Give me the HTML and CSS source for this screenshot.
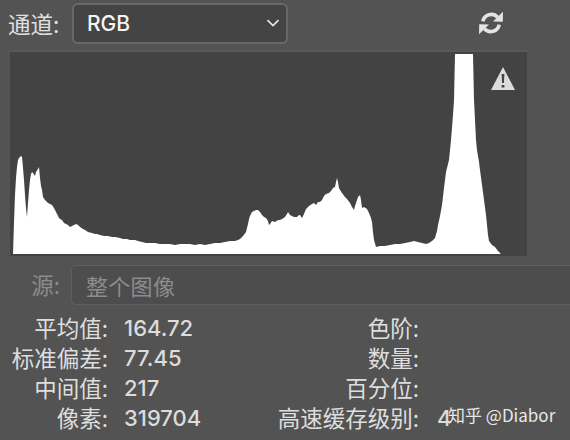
FILE: index.html
```html
<!DOCTYPE html>
<html lang="zh">
<head>
<meta charset="utf-8">
<title>直方图</title>
<link rel="stylesheet" href="styles.css">
</head>
<body>
<main class="panel">
  <div class="row channel">
    <span class="row-label">通道:</span>
    <div class="select">
      <span class="select-value">RGB</span>
      <svg class="chev" viewBox="0 0 14 8" width="14" height="8"><path d="M1.5 1.2 7 6.6l5.5-5.4" fill="none" stroke="#e6e6e6" stroke-width="1.7"/></svg>
    </div>
    <svg class="refresh" viewBox="0 0 26 26" width="26" height="26">
      <path d="M4.8 11.4A8.6 8.6 0 0 1 19.6 7.2" fill="none" stroke="#e4e4e4" stroke-width="3.6"/>
      <path d="M25 1.8 24.8 11.8 15 11.6Z" fill="#e4e4e4"/>
      <path d="M21.2 14.6A8.6 8.6 0 0 1 6.4 18.8" fill="none" stroke="#e4e4e4" stroke-width="3.6"/>
      <path d="M1 24.2 1.2 14.2 11 14.4Z" fill="#e4e4e4"/>
    </svg>
  </div>
  <div class="histogram">
    <svg class="graph" viewBox="10 52 517 204" width="517" height="204">
      <polygon fill="#ffffff" points="13,254 14,222 15,195 16,178 17,167 18,160 19,158 21,156 22,157 23,168 24,180 25,195 26,208 27,217 28,203 29,190 30,180 31,174 32,172 33,173 35,176 36,172 38,169 39,167 40,178 41,186 42,190 43,197 45,200 46,201 48,203 50,204 52,205 54,208 56,212 57,214 59,218 60,219 62,220 64,223 66,224 68,225 70,227 72,226 74,225 76,224 78,225 80,227 83,229 85,230 88,232 92,233 95,234 97,234 100,235 104,236 108,236 112,237 115,237 120,238 123,239 127,239 130,240 135,240 138,241 142,242 146,243 150,243 155,243 160,244 165,244 170,244 175,245 180,244 185,244 190,244 195,245 200,244 205,245 210,244 215,243 220,243 225,242 230,241 235,241 238,240 240,239 243,236 246,232 248,224 249,219 250,216 252,212 254,211 256,210 258,210 260,212 262,215 264,217 266,218 268,221 269,225 270,224 272,221 275,222 278,220 280,220 282,219 285,217 287,214 288,212 290,215 292,216 294,217 297,217 299,215 300,215 302,218 304,214 306,209 309,206 312,204 314,203 316,205 318,202 320,202 322,200 324,196 326,194 329,193 331,191 333,188 335,187 336,182 337,178 338,182 339,188 340,190 342,193 345,197 347,199 350,203 352,207 354,210 355,206 357,200 358,197 360,195 361,200 362,208 364,207 367,209 369,213 371,218 372,222 373,232 374,240 376,247 380,246 385,246 390,245 395,244 400,244 405,243 410,242 414,241 418,242 422,243 426,244 429,243 432,241 435,238 437,231 438,225 440,216 442,205 444,188 446,172 448,164 449,160 450,150 451,140 453,115 454,100 455,54 473,54 474,100 476,140 477,150 479,162 480,170 482,185 484,200 486,215 487,225 488,235 489,241 492,245 495,247 498,251 501,254"/>
      <path d="M503 67 515 90H491Z" fill="#dcdcdc"/>
      <path d="M501.6 74h2.8l-.5 9h-1.8ZM501.6 85h2.8v2.6h-2.8Z" fill="#434343"/>
    </svg>
  </div>
  <div class="row source">
    <span class="row-label dim">源:</span>
    <div class="select disabled">
      <span class="select-value-dim">整个图像</span>
      <svg class="chev-dim" viewBox="0 0 14 8" width="14" height="8"><path d="M1 1 7 7l6-6" fill="none" stroke="#707070" stroke-width="1.5"/></svg>
    </div>
  </div>
  <dl class="stats">
    <dt>平均值:</dt><dd class="num">164.72</dd><dt>色阶:</dt><dd></dd>
    <dt>标准偏差:</dt><dd class="num">77.45</dd><dt>数量:</dt><dd></dd>
    <dt>中间值:</dt><dd class="num">217</dd><dt>百分位:</dt><dd></dd>
    <dt>像素:</dt><dd class="num">319704</dd><dt>高速缓存级别:</dt><dd class="num">4</dd>
  </dl>
  <div class="watermark">知乎 @Diabor</div>
</main>
</body>
</html>
```
FILE: styles.css
```css
html, body {
  margin: 0;
  padding: 0;
}
body {
  width: 570px;
  height: 440px;
  overflow: hidden;
  background: #535353;
}
.panel {
  position: relative;
  width: 570px;
  height: 440px;
  overflow: hidden;
  display: flex;
  flex-direction: column;
  font-family: "Noto Sans CJK SC", "Liberation Sans", sans-serif;
  color: #e0e0e0;
  font-size: 19px;
}
.row {
  display: flex;
  align-items: center;
}
.channel {
  height: 43px;
  margin-top: 3px;
  padding-left: 8px;
}
.row-label {
  width: 64px;
  flex: none;
  font-size: 22.5px;
  line-height: 38px;
  margin-bottom: 3px;
  white-space: nowrap;
}
.dim {
  color: #8c8c8c;
  text-align: right;
  width: 60px;
  margin-right: 11px;
}
.select {
  flex: none;
  box-sizing: border-box;
  width: 216px;
  height: 41px;
  margin-bottom: 3px;
  display: flex;
  align-items: center;
  justify-content: space-between;
  padding: 0 6px 0 13px;
  background: #444444;
  border: 2px solid #686868;
  border-radius: 6px;
}
.select-value {
  font-family: "Inter", "Liberation Sans", sans-serif;
  font-size: 21px;
  font-weight: 500;
  color: #f4f4f4;
}
.chev {
  flex: none;
}
.refresh {
  flex: none;
  margin-left: 190px;
  margin-bottom: 3px;
}
.histogram {
  margin: 6px 0 0 10px;
  width: 517px;
  height: 204px;
  background: #434343;
  box-shadow: 0 -2px 0 #595959;
}
.graph {
  display: block;
}
.source {
  margin-top: 9px;
  height: 40px;
}
.disabled {
  width: 520px;
  height: 40px;
  margin: 0;
  padding: 0 6px 0 14px;
  background: #4d4d4d;
  border: 1px solid #5e5e5e;
  border-radius: 5px 0 0 5px;
  border-right: 0;
}
.select-value-dim {
  font-size: 22px;
  color: #8c8c8c;
  letter-spacing: .3px;
}
.chev-dim {
  flex: none;
  margin-right: -1px;
}
.stats {
  margin: 8px 0 0;
  display: grid;
  grid-template-columns: 108px 117px 194px 1fr;
  grid-auto-rows: 30px;
  align-items: start;
}
.stats dt {
  text-align: right;
  font-size: 22.5px;
  line-height: 28px;
  white-space: nowrap;
  color: #dedede;
}
.stats dd {
  margin: 0;
  padding-left: 16px;
  line-height: 30px;
}
.stats dd:nth-child(8n) {
  padding-left: 18px;
}
.num {
  font-family: "Inter", "Liberation Sans", sans-serif;
  font-size: 22px;
  font-weight: 500;
  color: #dcdcdc;
}
.watermark {
  position: absolute;
  left: 448px;
  top: 402px;
  font-size: 17px;
  line-height: 26px;
  color: #e8e8e8;
  white-space: nowrap;
}
```
